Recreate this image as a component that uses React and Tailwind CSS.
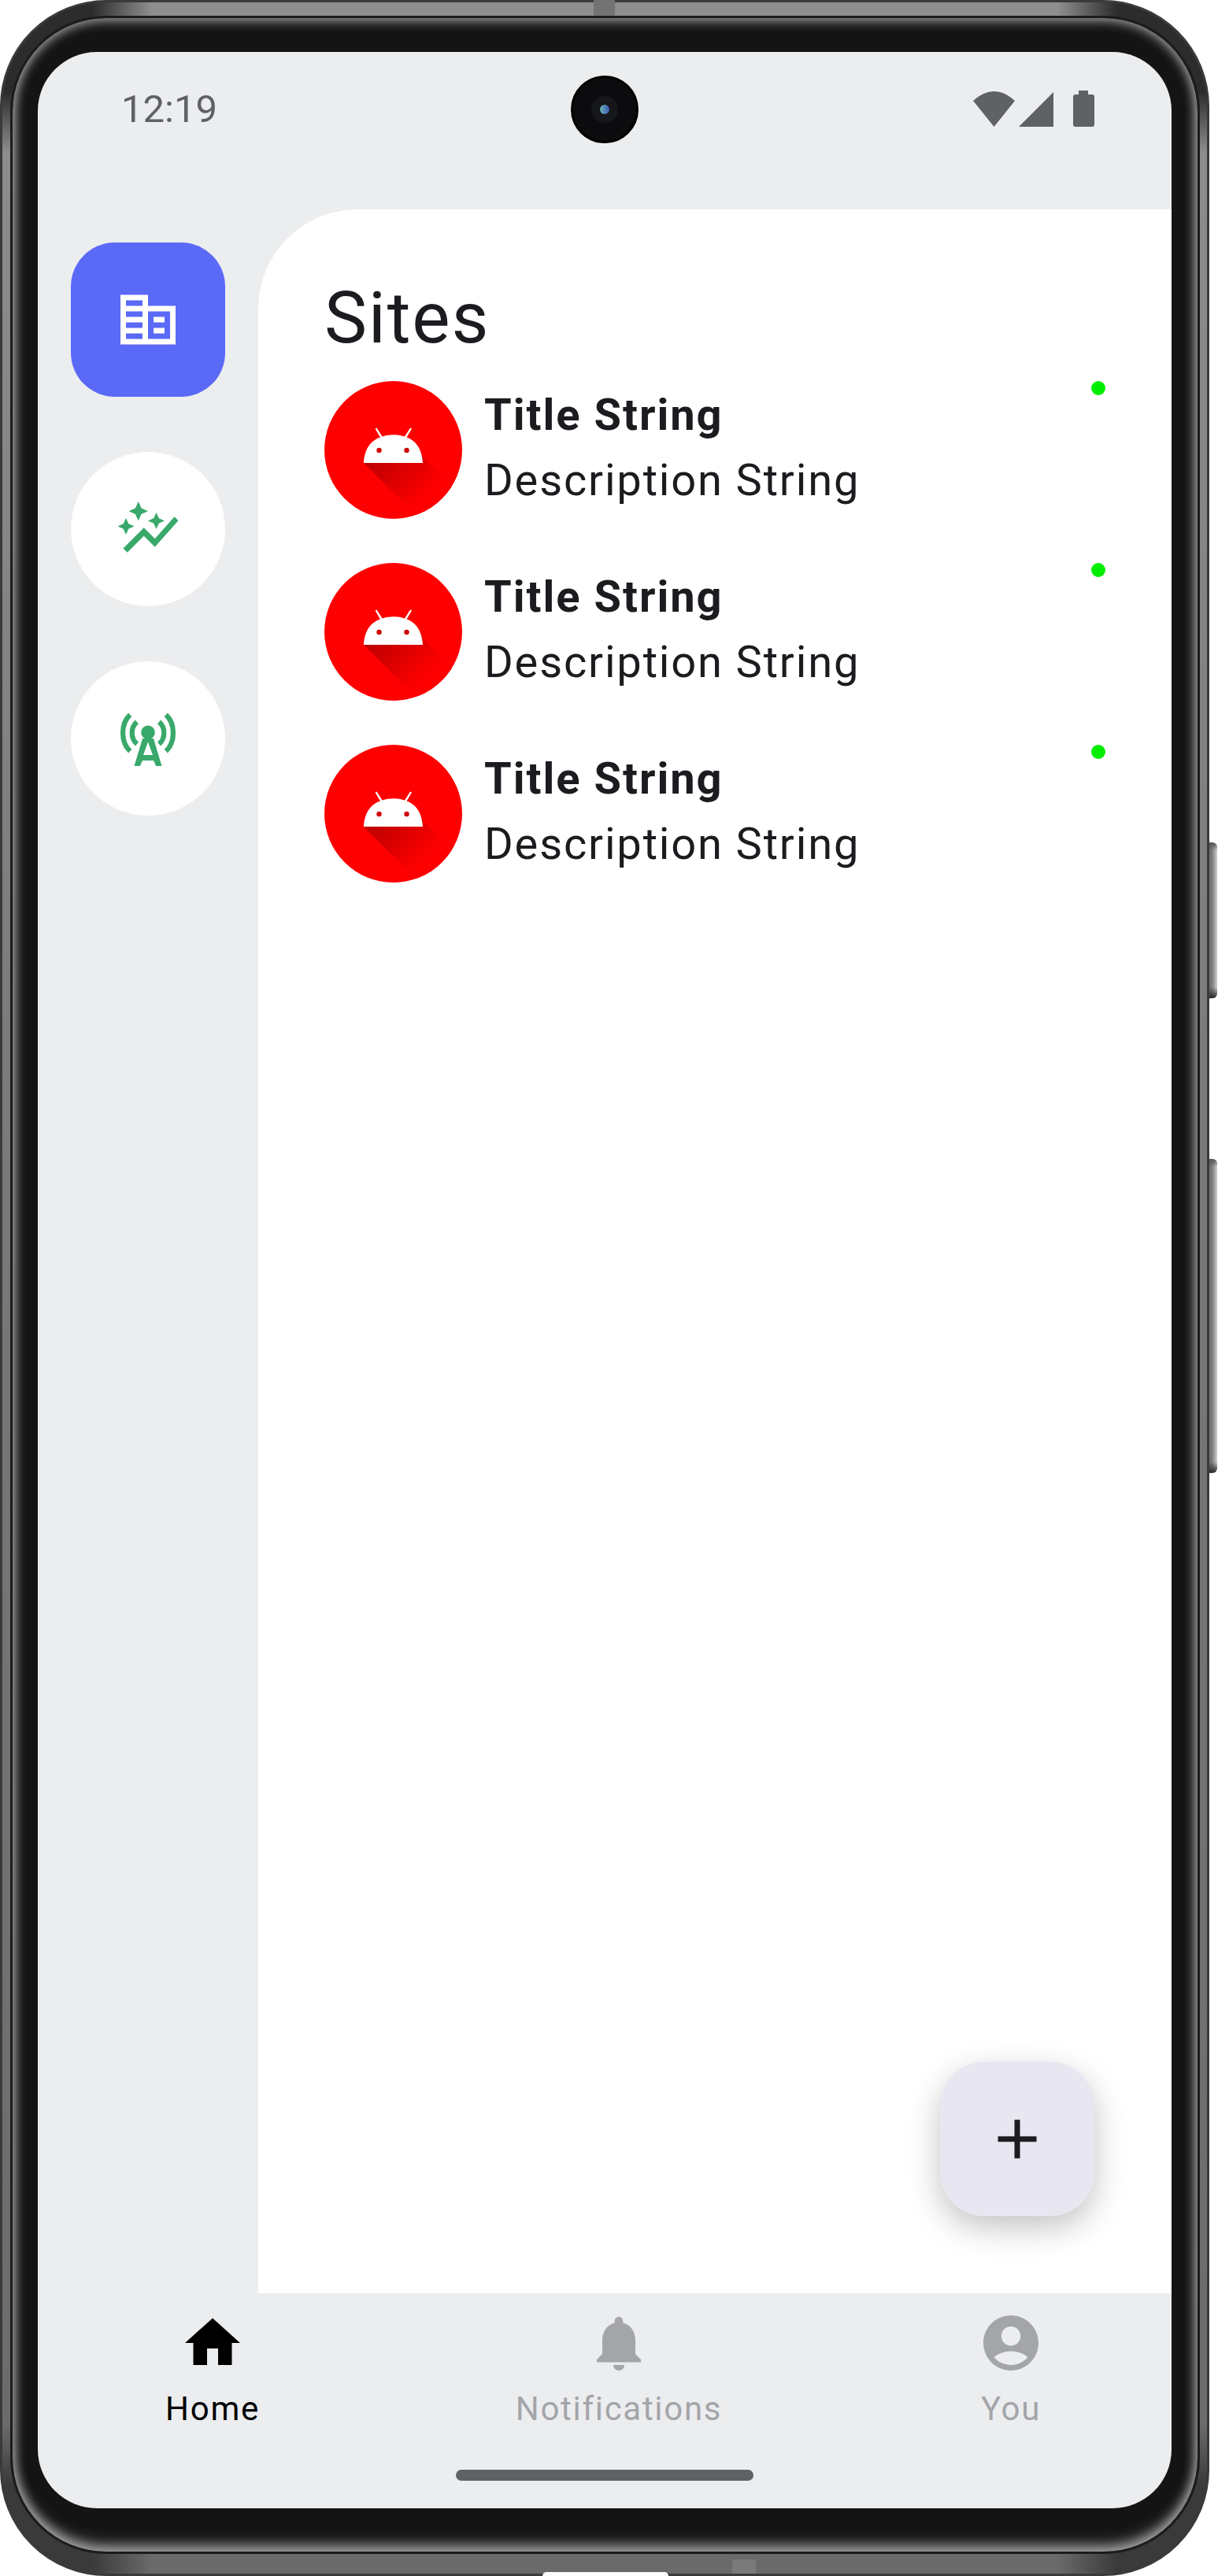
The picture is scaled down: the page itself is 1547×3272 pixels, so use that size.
import React from 'react';

const rows = [1, 2, 3];

const Avatar = ({ id }) => (
  <svg width="175" height="175" viewBox="0 0 175 175" className="shrink-0">
    <defs>
      <clipPath id={`clip-${id}`}>
        <circle cx="87.5" cy="87.5" r="87.5" />
      </clipPath>
      <linearGradient id={`shadow-${id}`} gradientUnits="userSpaceOnUse" x1="68" y1="100" x2="122" y2="154">
        <stop offset="0" stopColor="#c20000" />
        <stop offset="1" stopColor="#ff0000" />
      </linearGradient>
    </defs>
    <circle cx="87.5" cy="87.5" r="87.5" fill="#ff0000" />
    <g clipPath={`url(#clip-${id})`}>
      <path d="M50 104 L125 104 L123 94 L200 171 L200 200 L146 200 Z" fill={`url(#shadow-${id})`} />
    </g>
    <path d="M50 104 C51 85 60 75 71 71.5 L64.5 60.5 L66.500 59.500 L73.500 70.500 C82 67.500 94 67.500 102 70.500 L109 59.500 L111 60.500 L104.500 71.500 C115 75 124 85 125 104 Z" fill="#ffffff" />
    <circle cx="69.500" cy="88" r="3.200" fill="#d00000" />
    <circle cx="104.500" cy="88" r="3.200" fill="#d00000" />
  </svg>
);

const SiteRow = ({ id }) => (
  <div className="flex items-start">
    <Avatar id={id} />
    <div className="ml-[28px] mt-[2px] flex-1">
      <div className="text-[56px] leading-[83px] font-bold text-[#1c1b1f] tracking-[2px]">Title String</div>
      <div className="text-[56px] leading-[83px] text-[#1c1b1f] tracking-[1.85px]">Description String</div>
    </div>
    <div className="w-[18px] h-[18px] mr-[84px] rounded-full bg-[#00ee00]" />
  </div>
);

const RailButton = ({ active, children }) => (
  <div className={`w-[196px] h-[196px] flex items-center justify-center ${active ? 'rounded-[56px] bg-[#5a69f6] text-white' : 'rounded-full bg-white text-[#39a96b]'}`}>
    {children}
  </div>
);

const NavItem = ({ label, active, d }) => (
  <div className={`flex flex-col items-center ${active ? 'text-black' : 'text-[#a3a5a9]'}`}>
    <svg width="84" height="84" viewBox="0 0 24 24" fill="currentColor"><path d={d} /></svg>
    <div className="text-[42px] leading-[56px] mt-[14px] tracking-[1.7px]">{label}</div>
  </div>
);

export default function App() {
  return (
    <div className="relative w-[1547px] h-[3272px] bg-white font-['Roboto',sans-serif]">
      {/* volume and power keys */}
      <div className="absolute left-[1530px] top-[1070px] w-[16px] h-[198px] rounded-r-[6px] bg-[linear-gradient(180deg,#555_0,transparent_10px,transparent_calc(100%-14px),#2a2a2a_100%),linear-gradient(90deg,#5c5c5c,#7d7d7d_60%,#cfcfcf)]" />
      <div className="absolute left-[1530px] top-[1472px] w-[16px] h-[399px] rounded-r-[6px] bg-[linear-gradient(180deg,#555_0,transparent_10px,transparent_calc(100%-14px),#2a2a2a_100%),linear-gradient(90deg,#5c5c5c,#7d7d7d_60%,#cfcfcf)]" />

      {/* phone body */}
      <div className="relative w-[1536px] h-[3272px] rounded-[135px] border-[3px] border-[#3a3a3a] bg-[radial-gradient(circle_190px_at_0_0,#2c2c2c_60%,transparent),radial-gradient(circle_190px_at_100%_0,#2c2c2c_60%,transparent),radial-gradient(circle_190px_at_0_100%,#3a3a3a_60%,transparent),radial-gradient(circle_190px_at_100%_100%,#3a3a3a_60%,transparent),linear-gradient(180deg,#8f8f8f,#777777_50%,#6a6a6a)] pt-[17px] pl-[10px] pr-[9px] pb-[25px]">
        {/* antenna bands on the frame */}
        <div className="absolute left-[751px] top-[-3px] w-[27px] h-[20px] bg-[#737373]" />
        <div className="absolute left-[927px] bottom-[0px] w-[30px] h-[18px] bg-[#7a7a7a]" />
        <div className="absolute left-[686px] bottom-[-3px] w-[160px] h-[5px] rounded-t-[5px] bg-white" />
        <div className="w-full h-full rounded-[122px] border-[3px] border-[#1c1c1c] bg-[#141414] shadow-[inset_0_0_14px_3px_#a8a8a8,inset_0_-14px_18px_-4px_#6a6a6a] pt-[43px] pl-[32px] pr-[33px]">
          <div className="relative w-[1440px] h-[3120px] rounded-[75px] overflow-hidden bg-[#ecedef] flex flex-col">
            {/* status bar */}
            <div className="relative h-[200px] shrink-0 flex items-start justify-between pl-[106px] pr-[98px] text-[#5f6165]">
              <div className="text-[49px] leading-[58px] mt-[44px]">12:19</div>
              <div className="flex items-end mt-[49px]">
                <svg width="53" height="45" viewBox="0 0 53 45" fill="currentColor"><path d="M0 12 Q26.500 -12 53 12 L26.500 45 Z" /></svg>
                <svg width="44" height="44" viewBox="0 0 44 44" fill="currentColor" className="ml-[5px]"><path d="M44 0 V44 H0 Z" /></svg>
                <svg width="27" height="46" viewBox="0 0 27 46" fill="currentColor" className="ml-[25px]"><path d="M7 0 H19 V5 H24 Q27 5 27 8 V43 Q27 46 24 46 H3 Q0 46 0 43 V8 Q0 5 3 5 H7 Z" /></svg>
              </div>
              {/* punch hole camera */}
              <div className="absolute left-[677px] top-[30px] w-[86px] h-[86px] rounded-full bg-[#0c0c0e] border-[3px] border-black flex items-center justify-center">
                <div className="w-[34px] h-[34px] rounded-full bg-[#15171a] flex items-center justify-center">
                  <div className="w-[12px] h-[12px] rounded-full bg-[linear-gradient(90deg,#6fb4b4,#3a57b0)]" />
                </div>
              </div>
            </div>

            <div className="flex-1 flex min-h-0">
              {/* rail */}
              <div className="w-[280px] shrink-0 flex flex-col items-center gap-[70px] pt-[42px]">
                <RailButton active>
                  <svg width="84" height="84" viewBox="0 0 24 24" fill="currentColor">
                    <path fillRule="evenodd" d="M2 3h10v4h10v14H2z M4 5v2h6V5z M4 9v2h6V9z M4 13v2h6v-2z M4 17v2h6v-2z M12 9v10h8V9z" />
                    <path d="M14 11h4v2h-4z M14 15h4v2h-4z" />
                  </svg>
                </RailButton>
                <RailButton>
                  <svg width="84" height="84" viewBox="0 0 24 24" fill="currentColor">
                    <path d="M14.060 9.940L12 9l2.060-.94L15 6l.94 2.060L18 9l-2.060.94L15 12z M4 14l.94-2.060L7 11l-2.060-.94L4 8l-.94 2.060L1 11l2.060.94z M8.500 9l1.090-2.410L12 5.500 9.590 4.410 8.500 2 7.410 4.410 5 5.500l2.410 1.090z M4.500 20.500l6-6.010 4 4L23 8.930l-1.410-1.410-7.090 7.970-4-4L3 19z" />
                  </svg>
                </RailButton>
                <RailButton>
                  <svg width="84" height="84" viewBox="0 0 24 24" fill="none">
                    <g stroke="currentColor" strokeWidth="1.800">
                      <path d="M5.500 3.400C2 6.600 2 13.400 5.500 16.600" />
                      <path d="M18.500 3.400C22 6.600 22 13.400 18.500 16.600" />
                      <path d="M8 6C5.600 8 5.600 12 8 14" />
                      <path d="M16 6C18.400 8 18.400 12 16 14" />
                    </g>
                    <circle cx="12" cy="9.800" r="2.500" fill="currentColor" />
                    <path fillRule="evenodd" fill="currentColor" d="M10 12L7 22h2.100l.9-2h4l.9 2H17L14 12z M12 13.200L13.700 18h-3.400z" />
                  </svg>
                </RailButton>
              </div>

              {/* content panel */}
              <div className="relative flex-1 bg-white rounded-tl-[126px] pl-[84px]">
                <h1 className="text-[91px] leading-[107px] text-[#1c1b1f] font-normal tracking-[1.8px] mt-[85px] mb-[26px] h-[107px]">Sites</h1>
                <div className="flex flex-col gap-[56px]">
                  {rows.map((r) => <SiteRow key={r} id={r} />)}
                </div>
                <div className="absolute right-[98px] bottom-[98px] w-[196px] h-[196px] rounded-[56px] bg-[#e8e7f1] shadow-[0_14px_40px_rgba(0,0,0,0.24)] flex items-center justify-center text-[#1c1b1f]">
                  <svg width="84" height="84" viewBox="0 0 24 24" fill="currentColor"><path d="M19 13h-6v6h-2v-6H5v-2h6V5h2v6h6v2z" /></svg>
                </div>
              </div>
            </div>

            {/* bottom navigation */}
            <div className="h-[273px] shrink-0 pt-[21px] flex flex-col">
              <div className="grid grid-cols-[444px_588px_408px]">
                <NavItem label="Home" active d="M10 20v-6h4v6h5v-8h3L12 3 2 12h3v8z" />
                <NavItem label="Notifications" d="M12 22c1.100 0 2-.9 2-2h-4c0 1.100.89 2 2 2zm6-6v-5c0-3.070-1.640-5.640-4.500-6.320V4c0-.83-.67-1.500-1.500-1.500s-1.500.67-1.500 1.500v.68C7.630 5.360 6 7.920 6 11v5l-2 2v1h16v-1l-2-2z" />
                <NavItem label="You" d="M12 2C6.480 2 2 6.480 2 12s4.480 10 10 10 10-4.480 10-10S17.520 2 12 2zm0 4c1.930 0 3.500 1.570 3.500 3.500S13.930 13 12 13s-3.500-1.570-3.500-3.500S10.070 6 12 6zm0 14c-2.030 0-4.430-.82-6.140-2.880C7.550 15.800 9.680 15 12 15s4.450.8 6.140 2.120C16.430 19.180 14.030 20 12 20z" />
              </div>
              <div className="w-[378px] h-[14px] mt-[49px] mx-auto rounded-[7px] bg-[#5f6165]" />
            </div>
          </div>
        </div>
      </div>
    </div>
  );
}
